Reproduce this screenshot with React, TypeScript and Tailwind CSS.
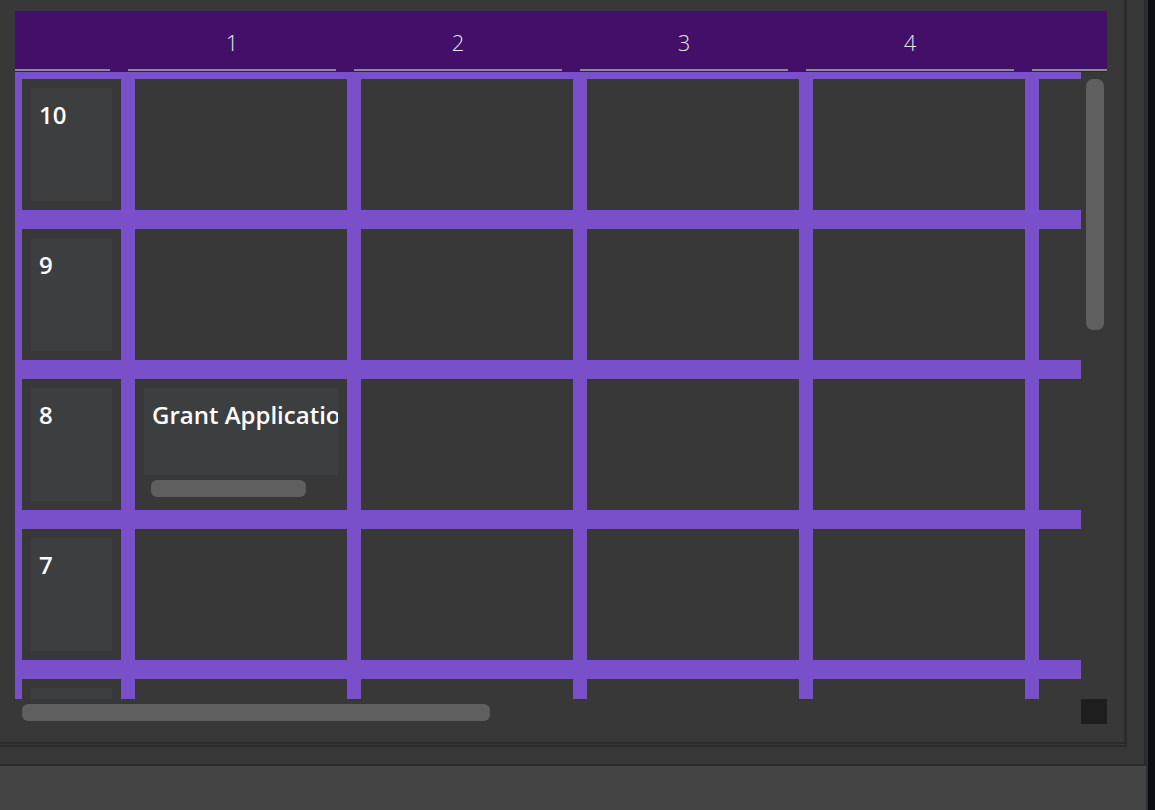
const headers = ['', '1', '2', '3', '4', ''];
const rows = [10, 9, 8, 7, 6];
const dataCols = [1, 2, 3, 4, 5];

function HeaderRow() {
  return (
    <div className="flex h-[61px] w-[1092px] shrink-0 gap-[18px] overflow-hidden bg-[#430f69]">
      {headers.map((h, i) => (
        <div
          key={i}
          className={`${i === 0 ? 'w-[95px]' : 'w-[208px]'} h-[60px] shrink-0 border-b-2 border-[#8a8a8a] pt-[16px] text-center text-[22px] leading-[30px] font-light text-[#e4e4e4]`}
        >
          {h}
        </div>
      ))}
    </div>
  );
}

function RowLabel({ n }: { n: number }) {
  return (
    <div className="h-[131px] w-[99px] shrink-0 bg-[#383838] p-[9px]">
      <div className="h-full bg-[#3d3e40] pl-[8px] pt-[11px] text-[24px] leading-[32px] font-semibold text-white">
        {n}
      </div>
    </div>
  );
}

function Cell({ task }: { task?: string }) {
  return (
    <div className="h-[131px] w-[212px] shrink-0 bg-[#383838] p-[9px]">
      {task && (
        <div className="flex flex-col">
          <div className="h-[87px] overflow-hidden whitespace-nowrap bg-[#3d3e40] pl-[8px] pt-[11px] text-[24px] leading-[32px] font-semibold text-white">
            {task}
          </div>
          <div className="ml-[7px] mt-[5px] h-[17px] w-[155px] rounded-md bg-[#5f5f5f]" />
        </div>
      )}
    </div>
  );
}

function Board() {
  return (
    <div className="flex w-[1092px] flex-col">
      <HeaderRow />
      <div className="flex h-[627px]">
        <div className="w-[1066px] overflow-hidden bg-[#7a4fca] pl-[7px] pt-[7px]">
          <div className="flex flex-col gap-[19px]">
            {rows.map((r) => (
              <div key={r} className="flex gap-[14px]">
                <RowLabel n={r} />
                {dataCols.map((c) => (
                  <Cell key={c} task={r === 8 && c === 1 ? 'Grant Application' : undefined} />
                ))}
              </div>
            ))}
          </div>
        </div>
        <div className="w-[26px] pl-[5px] pt-[7px]">
          <div className="h-[251px] w-[18px] rounded-[7px] bg-[#5f5f5f]" />
        </div>
      </div>
      <div className="flex h-[25px]">
        <div className="w-[1066px] pl-[7px] pt-[5px]">
          <div className="h-[17px] w-[468px] rounded-md bg-[#5f5f5f]" />
        </div>
        <div className="w-[26px] bg-[#1e1e1e]" />
      </div>
    </div>
  );
}

export default function App() {
  return (
    <div className="flex h-[810px] w-[1155px] bg-[#0b0e13] font-['Open_Sans',sans-serif]">
      <div className="flex w-[1146px] flex-col">
        <div className="h-[766px] border-b-2 border-r-2 border-[#2b2b2b] bg-[#383838]">
          <div className="h-[747px] w-[1127px] border-b-[5px] border-r-[3px] border-[#2b2b2b] [border-bottom-style:double] pl-[15px] pt-[11px]">
            <Board />
          </div>
        </div>
        <div className="flex-1 bg-[#444444]" />
      </div>
      <div className="w-[2px] bg-[#2f2f2f]" />
    </div>
  );
}
